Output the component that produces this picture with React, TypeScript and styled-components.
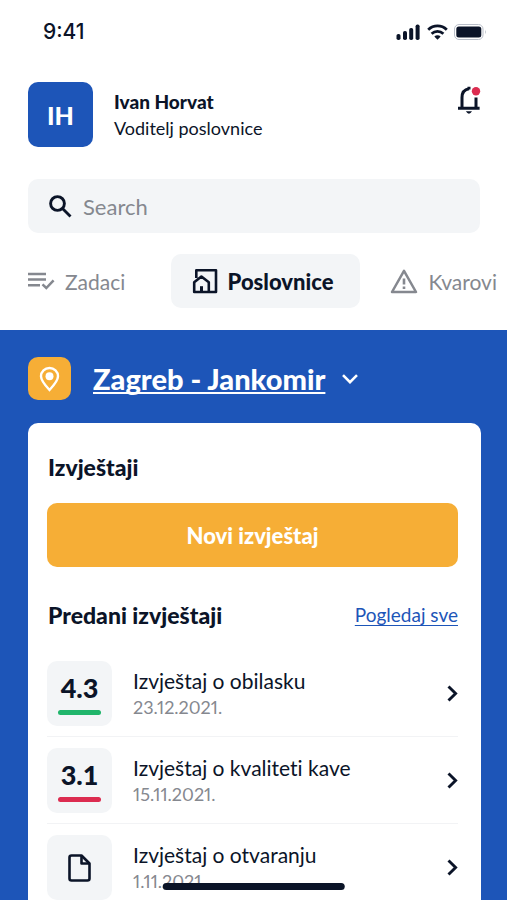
import React from "react";
import styled, { createGlobalStyle } from "styled-components";

const color = {
  ink: "#0b1428",
  muted: "#85888f",
  blue: "#1d55b8",
  amber: "#f6ae36",
  mist: "#f3f5f7",
  green: "#20b56b",
  red: "#dc2c50",
};

const GlobalStyle = createGlobalStyle`
  *, *::before, *::after { box-sizing: border-box; }
  body { margin: 0; background: #fff; }
  button, input, select { font: inherit; color: inherit; }
  button { cursor: pointer; }
  svg { display: block; flex: none; }
`;

const Screen = styled.div`
  display: flex;
  flex-direction: column;
  min-height: 100vh;
  overflow: hidden;
  color: ${color.ink};
  font-family: Lato, "Open Sans", sans-serif;
  font-variant-ligatures: none;
`;

const StatusBar = styled.div`
  display: flex;
  align-items: center;
  justify-content: space-between;
  height: 64px;
  padding: 0 20px 0 43px;
`;

const Clock = styled.time`
  font: 500 21px/24px Inter, sans-serif;
`;

const StatusIcons = styled.div`
  display: flex;
  align-items: center;
  gap: 6px;
`;

const Profile = styled.header`
  display: flex;
  align-items: center;
  gap: 21px;
  padding: 18px 26px 0 28px;
`;

const Avatar = styled.div`
  display: grid;
  place-items: center;
  width: 65px;
  height: 65px;
  border-radius: 10px;
  background: ${color.blue};
  color: #fff;
  font-size: 25px;
  font-weight: 900;
`;

const Person = styled.div`
  flex: 1;
  line-height: 26px;
`;

const PersonName = styled.div`
  font-size: 19px;
  font-weight: 900;
`;

const PersonRole = styled.div`
  font-size: 18px;
`;

const IconButton = styled.button`
  align-self: flex-start;
  padding: 3px 0;
  border: 0;
  background: none;
`;

const SearchBox = styled.label`
  display: flex;
  align-items: center;
  gap: 11px;
  height: 54px;
  margin: 32px 27px 0 28px;
  padding: 0 21px;
  border-radius: 10px;
  background: ${color.mist};
`;

const SearchInput = styled.input`
  flex: 1;
  min-width: 0;
  padding: 0;
  border: 0;
  outline: 0;
  background: none;
  font-size: 22px;
  &::placeholder { color: ${color.muted}; opacity: 1; }
`;

const Tabs = styled.nav`
  display: flex;
  gap: 30px;
  margin: 21px 10px 22px 28px;
`;

const Tab = styled.button<{ $active?: boolean }>`
  display: flex;
  align-items: center;
  gap: 10px;
  height: 54px;
  padding: ${(p) => (p.$active ? "0 27px 0 21px" : "0")};
  border: 0;
  border-radius: 10px;
  background: ${(p) => (p.$active ? color.mist : "none")};
  color: ${(p) => (p.$active ? color.ink : color.muted)};
  font-size: ${(p) => (p.$active ? "22px" : "21px")};
  font-weight: ${(p) => (p.$active ? 900 : 400)};
  &:first-child { margin-right: auto; }
`;

const Branch = styled.main`
  display: flex;
  flex: 1;
  flex-direction: column;
  padding: 27px 26px 0 28px;
  background: ${color.blue};
`;

const Location = styled.div`
  display: flex;
  align-items: center;
  gap: 22px;
  color: #fff;
`;

const PinTile = styled.div`
  display: grid;
  place-items: center;
  width: 43px;
  height: 43px;
  border-radius: 10px;
  background: ${color.amber};
`;

const LocationPicker = styled.label`
  display: flex;
  align-items: center;
  gap: 15px;
`;

const LocationSelect = styled.select`
  appearance: none;
  padding: 0;
  border: 0;
  outline: 0;
  background: none;
  font-size: 29px;
  font-weight: 900;
  line-height: 40px;
  text-decoration: underline 2px;
  text-decoration-skip-ink: none;
  text-underline-offset: 2px;
  option { color: ${color.ink}; }
`;

const Card = styled.section`
  flex: 1;
  margin-top: 23px;
  padding: 30px 23px 0 19px;
  border-radius: 10px 10px 0 0;
  background: #fff;
`;

const Heading = styled.h2`
  margin: 0;
  padding-left: 1px;
  font-size: 23px;
  font-weight: 900;
  line-height: 28px;
`;

const PrimaryButton = styled.button`
  width: 100%;
  height: 64px;
  margin: 22px 0 34px;
  border: 0;
  border-radius: 10px;
  background: ${color.amber};
  color: #fff;
  font-size: 22px;
  font-weight: 900;
`;

const HeadingRow = styled.div`
  display: flex;
  align-items: center;
  justify-content: space-between;
`;

const TextLink = styled.a`
  color: ${color.blue};
  font-size: 19px;
  line-height: 28px;
  text-decoration: underline 1px;
  text-decoration-skip-ink: none;
  text-underline-offset: 3px;
`;

const ReportList = styled.ul`
  margin: 21px 0 0;
  padding: 0;
  list-style: none;
`;

const ReportItem = styled.li`
  padding: 11px 0 10px;
  border-bottom: 1px solid #f2f3f5;
  &:last-child { padding-bottom: 0; border: 0; }
`;

const ReportButton = styled.button`
  display: flex;
  align-items: center;
  gap: 21px;
  width: 100%;
  padding: 0;
  border: 0;
  background: none;
  text-align: left;
`;

const ReportTile = styled.span`
  display: flex;
  flex-direction: column;
  align-items: center;
  justify-content: center;
  gap: 7px;
  width: 65px;
  height: 65px;
  border-radius: 10px;
  background: ${color.mist};
`;

const Score = styled.span`
  font-size: 27px;
  font-weight: 900;
  line-height: 30px;
`;

const ScoreBar = styled.span<{ $tone: string }>`
  width: 43px;
  height: 5px;
  border-radius: 3px;
  background: ${(p) => p.$tone};
`;

const ReportText = styled.span`
  display: flex;
  flex: 1;
  flex-direction: column;
  line-height: 27px;
`;

const ReportTitle = styled.span`
  font-size: 21px;
`;

const ReportDate = styled.span`
  color: ${color.muted};
  font-size: 18px;
  font-variant-numeric: proportional-nums;
`;

const HomeIndicator = styled.div`
  position: fixed;
  bottom: 10px;
  left: 50%;
  width: 36%;
  height: 7px;
  border-radius: 4px;
  background: ${color.ink};
  transform: translateX(-50%);
`;

const SignalIcon = () => (
  <svg width="25" height="16" viewBox="0 0 25 16" fill={color.ink} aria-hidden="true">
    <rect x="0.5" y="10" width="4" height="6" rx="1.8" />
    <rect x="7" y="7" width="4" height="9" rx="1.8" />
    <rect x="13.2" y="4" width="4" height="12" rx="1.8" />
    <rect x="19.6" y="0.5" width="4" height="15.5" rx="1.8" />
  </svg>
);

const WifiIcon = () => (
  <svg width="21" height="16" viewBox="0 0 21 16" fill="none" stroke={color.ink} strokeWidth="2.8" aria-hidden="true">
    <path d="M1.2 5.7C6.5.6 14.5.6 19.8 5.7" />
    <path d="M4.6 9.7C8 6.6 13 6.6 16.4 9.7" />
    <path d="M10.5 15.7 7.3 12.4C9.2 10.9 11.8 10.9 13.7 12.4Z" fill={color.ink} stroke="none" />
  </svg>
);

const BatteryIcon = () => (
  <svg width="33" height="16" viewBox="0 0 33 16" aria-hidden="true">
    <rect x="0.5" y="0.5" width="28.5" height="15" rx="4.5" fill="none" stroke="#b9bec8" />
    <rect x="2.3" y="2.5" width="25" height="11" rx="2.5" fill={color.ink} />
    <path d="M31 5.8q1.8 2.2 0 4.4z" fill="#b9bec8" />
  </svg>
);

const BellIcon = () => (
  <svg width="24" height="30" viewBox="0 0 24 30" fill="none" aria-hidden="true">
    <path d="M12 4.5V1.8M5 23V12.5C5 8 7.5 4.6 12 3.8M19 12.5V23M1 23.2H22.6" stroke={color.ink} strokeWidth="3" />
    <path d="M8.8 26.3H15Q12 31 8.8 26.3Z" fill={color.ink} />
    <circle cx="19" cy="6.2" r="4.2" fill={color.red} />
  </svg>
);

const SearchIcon = () => (
  <svg width="23" height="23" viewBox="0 0 23 23" fill="none" stroke={color.ink} strokeWidth="2.9" aria-hidden="true">
    <circle cx="8.5" cy="8.5" r="6.9" />
    <path d="M13.5 13.5 21.5 21.5" />
  </svg>
);

const TasksIcon = () => (
  <svg width="27" height="18" viewBox="0 0 27 18" fill="none" stroke="currentColor" strokeWidth="2.5" aria-hidden="true">
    <path d="M0 2H18M0 7.5H18M0 13.3H12M14.5 12.3 18.3 16 25.6 8.3" />
  </svg>
);

const BranchIcon = () => (
  <svg width="26" height="26" viewBox="0 0 26 26" fill="none" stroke="currentColor" strokeWidth="2.6" strokeLinejoin="round" aria-hidden="true">
    <path d="M4.3 10V2.2H24V24H16.8M2.2 14.3 9.4 8.5 16.8 14.3V24H2.2Z" />
    <path d="M9.5 24V18.2" strokeWidth="3" />
  </svg>
);

const WarningIcon = () => (
  <svg width="28" height="25" viewBox="0 0 28 25" fill="none" stroke="currentColor" strokeWidth="2.5" aria-hidden="true">
    <path d="M14 1.8 26 23H2Z" strokeLinejoin="round" />
    <path d="M14 9.5V15.5M14 17.5V20" strokeWidth="2.6" />
  </svg>
);

const PinIcon = () => (
  <svg width="21" height="26" viewBox="0 0 21 26" fill="none" aria-hidden="true">
    <path d="M10.5 24C5.5 18.7 2 14.4 2 10.3a8.5 8.3 0 0 1 17 0C19 14.4 15.5 18.7 10.5 24Z" stroke="#fff" strokeWidth="2.4" />
    <circle cx="10.5" cy="10.2" r="4" fill="#fff" />
  </svg>
);

const ChevronDown = () => (
  <svg width="16" height="10" viewBox="0 0 16 10" fill="none" stroke="#fff" strokeWidth="2.6" aria-hidden="true">
    <path d="M1 1.2 8 8.2 15 1.2" />
  </svg>
);

const ChevronRight = () => (
  <svg width="11" height="17" viewBox="0 0 11 17" fill="none" stroke={color.ink} strokeWidth="2.9" aria-hidden="true">
    <path d="M1.5 1.5 8.6 8.5 1.5 15.5" />
  </svg>
);

const FileIcon = () => (
  <svg width="23" height="28" viewBox="0 0 23 28" fill="none" stroke={color.ink} strokeWidth="2.6" strokeLinejoin="round" aria-hidden="true">
    <path d="M3.5 1.5H13.5L21.5 9.5V24.5Q21.5 26.5 19.5 26.5H3.5Q1.5 26.5 1.5 24.5V3.5Q1.5 1.5 3.5 1.5Z" />
    <path d="M13.5 2V9.5H21" />
  </svg>
);

type Report = { title: string; date: string; score?: string; tone?: string };

const reports: Report[] = [
  { title: "Izvještaj o obilasku", date: "23.12.2021.", score: "4.3", tone: color.green },
  { title: "Izvještaj o kvaliteti kave", date: "15.11.2021.", score: "3.1", tone: color.red },
  { title: "Izvještaj o otvaranju", date: "1.11.2021." },
];

export default function App() {
  return (
    <Screen>
      <GlobalStyle />
      <StatusBar>
        <Clock>9:41</Clock>
        <StatusIcons>
          <SignalIcon />
          <WifiIcon />
          <BatteryIcon />
        </StatusIcons>
      </StatusBar>
      <Profile>
        <Avatar>IH</Avatar>
        <Person>
          <PersonName>Ivan Horvat</PersonName>
          <PersonRole>Voditelj poslovnice</PersonRole>
        </Person>
        <IconButton aria-label="Obavijesti">
          <BellIcon />
        </IconButton>
      </Profile>
      <SearchBox>
        <SearchIcon />
        <SearchInput type="search" placeholder="Search" aria-label="Search" />
      </SearchBox>
      <Tabs>
        <Tab>
          <TasksIcon />
          Zadaci
        </Tab>
        <Tab $active aria-current="page">
          <BranchIcon />
          Poslovnice
        </Tab>
        <Tab>
          <WarningIcon />
          Kvarovi
        </Tab>
      </Tabs>
      <Branch>
        <Location>
          <PinTile>
            <PinIcon />
          </PinTile>
          <LocationPicker>
            <LocationSelect aria-label="Poslovnica">
              <option>Zagreb - Jankomir</option>
            </LocationSelect>
            <ChevronDown />
          </LocationPicker>
        </Location>
        <Card>
          <Heading>Izvještaji</Heading>
          <PrimaryButton>Novi izvještaj</PrimaryButton>
          <HeadingRow>
            <Heading>Predani izvještaji</Heading>
            <TextLink href="#izvjestaji">Pogledaj sve</TextLink>
          </HeadingRow>
          <ReportList id="izvjestaji">
            {reports.map((r) => (
              <ReportItem key={r.title}>
                <ReportButton>
                  <ReportTile>
                    {r.score ? (
                      <>
                        <Score>{r.score}</Score>
                        <ScoreBar $tone={r.tone ?? color.green} />
                      </>
                    ) : (
                      <FileIcon />
                    )}
                  </ReportTile>
                  <ReportText>
                    <ReportTitle>{r.title}</ReportTitle>
                    <ReportDate>{r.date}</ReportDate>
                  </ReportText>
                  <ChevronRight />
                </ReportButton>
              </ReportItem>
            ))}
          </ReportList>
        </Card>
      </Branch>
      <HomeIndicator />
    </Screen>
  );
}
